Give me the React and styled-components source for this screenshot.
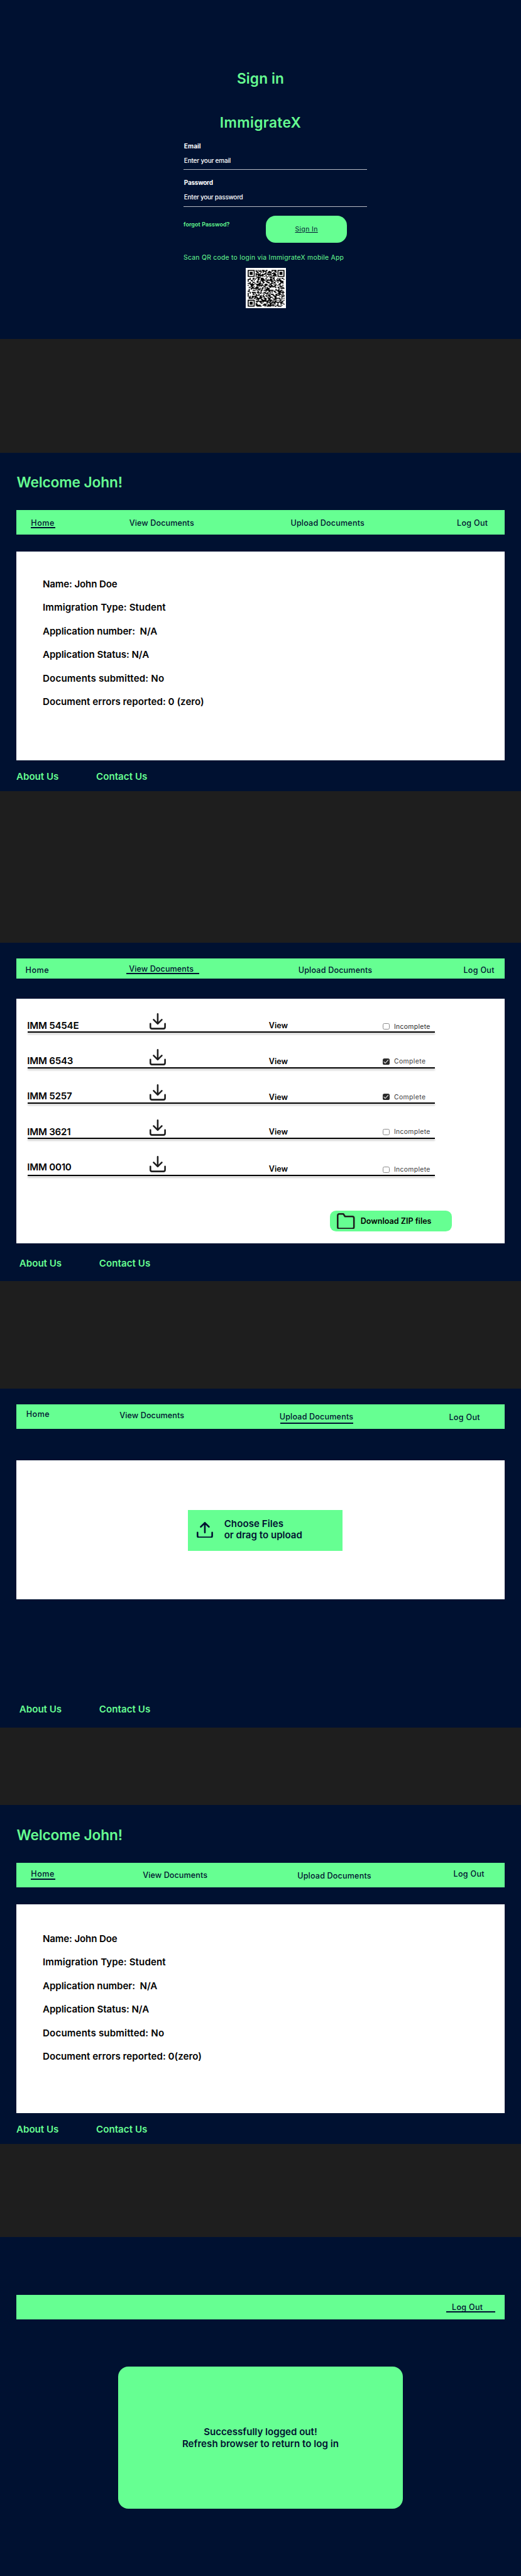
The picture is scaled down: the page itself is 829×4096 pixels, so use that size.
import React from 'react';
import styled, { createGlobalStyle, css } from 'styled-components';

const navy = '#001131';
const green = '#66ff92';
const ink = '#1e1e1e';

// 1rem is one 128th of the window's width, so every length follows the window.
const GlobalStyle = createGlobalStyle`
  html { font-size: calc(100vw / 128); background: #1e1e1e; }
  body { margin: 0; font-family: Inter, 'Liberation Sans', sans-serif; font-weight: 600; }
  *, *::before, *::after { box-sizing: border-box; }
  h1, h2, p { margin: 0; font-weight: inherit; }
  a { color: inherit; text-decoration: none; }
`;

const Board = styled.main`
  display: flex;
  flex-direction: column;
  width: 128rem;
`;

const Screen = styled.section`
  display: flex;
  flex-direction: column;
  height: 83.2rem;
  flex: none;
  margin-bottom: ${(p) => p.$after || 0}rem;
  padding: ${(p) => p.$top}rem 4rem 0;
  background: ${navy};
`;

const textStyle = css`
  letter-spacing: ${(p) => p.$track || 0}em;
  white-space: pre;
`;

const Title = styled.h1`
  ${textStyle}
  font-size: 3.5rem;
  line-height: 4.4rem;
  color: ${green};
`;

const CenteredTitle = styled(Title)`
  text-align: center;
  & + & { margin-top: 6.47rem; }
`;

const Welcome = styled(Title)`
  padding-left: 0.1rem;
  margin-bottom: 4.65rem;
`;

/* Sign in */
const Form = styled.form`
  display: flex;
  flex-direction: column;
  width: 45rem;
  margin: 2.49rem 0 0 41.1rem;
`;

const Field = styled.label`
  display: flex;
  flex-direction: column;
  padding-left: 0.12rem;
  font-size: 1.54rem;
  line-height: 2rem;
  color: #fff;
  & + & { margin-top: 2.15rem; }
`;

const FieldName = styled.span`
  ${textStyle}
  font-weight: 650;
`;

const FieldHint = styled.span`
  ${textStyle}
  margin: 1.6rem 0 0 -0.12rem;
  padding: 0 0 ${(p) => p.$space}rem 0.12rem;
  border-bottom: 1px solid rgba(255, 255, 255, 0.72);
  font-weight: 550;
`;

const Actions = styled.div`
  display: grid;
  grid-template-columns: 20.2rem 20rem;
  margin-top: 2.2rem;
`;

const Forgot = styled.a`
  ${textStyle}
  margin-top: 1.15rem;
  font-size: 1.37rem;
  line-height: 1.7rem;
  color: ${green};
`;

const SignInButton = styled.button`
  height: 6.5rem;
  padding: 0;
  border: 0;
  border-radius: 2.4rem;
  background: ${green};
  color: ${navy};
  font: 400 1.6rem/2rem Inter, sans-serif;
  letter-spacing: 0.039em;
  text-decoration: underline;
`;

const ScanNote = styled.p`
  margin-top: 2.72rem;
  font-size: 1.6rem;
  line-height: 2rem;
  font-weight: 400;
  letter-spacing: 0.026em;
  white-space: nowrap;
  color: ${green};
`;

const QrImage = styled.svg`
  display: block;
  width: 10rem;
  height: 10rem;
  margin: 1.48rem 0 0 15.2rem;
  background: #fff;
`;

/* Navigation and footer */
const Nav = styled.nav`
  display: grid;
  grid-template-columns: ${(p) => p.$columns};
  align-items: start;
  flex: none;
  height: ${(p) => p.$height || 6}rem;
  padding: 0.08rem 0 0 ${(p) => p.$indent}rem;
  background: ${green};
  color: ${navy};
  font-weight: 550;
`;

const NavLink = styled.a`
  ${textStyle}
  margin-top: ${(p) => p.$drop}rem;
  font-size: 1.94rem;
  line-height: 2.4rem;
  ${(p) =>
    p.$bar &&
    css`
      &::after {
        content: '';
        display: block;
        width: ${p.$bar.width}rem;
        height: 0.3rem;
        margin: ${p.$bar.top - 0.08}rem 0 0 ${p.$bar.left}rem;
        background: ${navy};
      }
    `}
`;

const Footer = styled.footer`
  display: grid;
  grid-template-columns: 19.6rem auto;
  margin-top: ${(p) => p.$gap}rem;
  padding-left: ${(p) => p.$indent || 0}rem;
  font-size: 2.33rem;
  line-height: 2.9rem;
  color: ${green};
`;

const FooterLink = styled.a`
  ${textStyle}
`;

/* Panels */
const Panel = styled.div`
  display: flex;
  flex-direction: column;
  flex: none;
  height: ${(p) => p.$height}rem;
  margin-top: ${(p) => p.$gap}rem;
  background: #fff;
  color: #000;
`;

const Facts = styled.div`
  display: flex;
  flex-direction: column;
  gap: 2.9rem;
  padding: ${(p) => p.$top}rem 0 0 6.5rem;
  font-size: 2.33rem;
  line-height: 2.9rem;
`;

const Fact = styled.p`
  ${textStyle}
`;

const DocumentList = styled.div`
  display: flex;
  flex-direction: column;
  width: 100rem;
  margin-left: 2.8rem;
`;

const DocumentRow = styled.div`
  display: grid;
  grid-template-columns: 29.9rem 29.35rem 28.05rem auto;
  align-items: end;
  height: ${(p) => p.$height}rem;
`;

const Rule = styled.div`
  height: 0.3rem;
  background: #000;
  box-shadow: 0 0.4rem 0.4rem rgba(0, 0, 0, 0.25);
`;

const DocumentName = styled.span`
  ${textStyle}
  margin: 0 0 ${(p) => p.$lift}rem -0.12rem;
  font-size: 2.33rem;
  line-height: 2.9rem;
`;

const RowIcon = styled.span`
  display: flex;
  margin-bottom: ${(p) => p.$lift}rem;
`;

const ViewLink = styled.a`
  margin-bottom: ${(p) => p.$lift}rem;
  font-size: 1.94rem;
  line-height: 2.4rem;
  letter-spacing: 0.005em;
`;

const Status = styled.span`
  display: flex;
  align-items: flex-end;
  gap: 1.1rem;
  margin: 0 0 ${(p) => p.$lift}rem;
  font-size: 1.6rem;
  line-height: 2rem;
  font-weight: 400;
  letter-spacing: ${(p) => (p.$done ? 0.042 : 0.034)}em;
  color: ${(p) => p.$color};
`;

const Box = styled.span`
  display: flex;
  width: 1.6rem;
  height: 1.6rem;
  margin-bottom: 0.2rem;
  border-radius: 0.4rem;
  ${(p) => (p.$done ? 'background: #2c2c2c;' : 'border: 1px solid #8a8a8a;')}
`;

const Glyph = styled.svg`
  display: block;
  width: ${(p) => p.$w}rem;
  height: ${(p) => p.$h}rem;
  fill: none;
  stroke: ${(p) => p.$color};
  stroke-width: ${(p) => p.$stroke || 2};
  stroke-linecap: round;
  stroke-linejoin: round;
`;

const ZipButton = styled.button`
  display: flex;
  align-items: center;
  gap: 1.43rem;
  width: 30rem;
  height: 5rem;
  margin: 8.6rem 0 0 77rem;
  padding: 0 0 0 1.77rem;
  border: 0;
  border-radius: 1.5rem;
  background: ${green};
  color: #000;
  font: 600 1.94rem/2.4rem Inter, sans-serif;
  letter-spacing: 0;
`;

const DropZone = styled.div`
  display: flex;
  align-items: flex-start;
  gap: 2.77rem;
  width: 38rem;
  height: 10rem;
  margin: 12.1rem 0 0 42.1rem;
  padding: 1.98rem 0 0 2.2rem;
  background: ${green};
  color: ${navy};
  font-size: 2.33rem;
  line-height: 2.9rem;

  svg { margin-top: 0.92rem; }
`;

const Line = styled.span`
  ${textStyle}
  display: block;
`;

const Notice = styled.div`
  display: flex;
  flex-direction: column;
  align-items: center;
  justify-content: center;
  width: 70rem;
  height: 35rem;
  margin: 11.6rem 0 0 25rem;
  padding-top: 0.2rem;
  border-radius: 2.5rem;
  background: ${green};
  color: ${navy};
  font-size: 2.33rem;
  line-height: 2.9rem;
`;

const DownloadIcon = () => (
  <Glyph $w={4} $h={4} $color={ink} viewBox="2 2 20 20">
    <path d="M21 15v4a2 2 0 0 1-2 2H5a2 2 0 0 1-2-2v-4M7 10l5 5 5-5M12 15V3" />
  </Glyph>
);

const UploadIcon = () => (
  <Glyph $w={4} $h={4} $color={navy} viewBox="2 2 20 20">
    <path d="M21 15v4a2 2 0 0 1-2 2H5a2 2 0 0 1-2-2v-4M17 8l-5-5-5 5M12 3v12" />
  </Glyph>
);

const FolderIcon = () => (
  <Glyph $w={4.4} $h={4} $color={ink} viewBox="1 2 22 20">
    <path d="M22 19a2 2 0 0 1-2 2H4a2 2 0 0 1-2-2V5a2 2 0 0 1 2-2h5l2 3h9a2 2 0 0 1 2 2z" />
  </Glyph>
);

const Check = () => (
  <Glyph $w={1.6} $h={1.6} $color="#fff" $stroke={1.6} viewBox="0 0 16 16">
    <path d="M13.2 4.2 6.1 11.6 2.9 8.3" />
  </Glyph>
);

const QR_SIZE = 37;

// Dark when the module belongs to a square ring pattern, null outside of it.
function ring(x, y, cx, cy, radius) {
  const d = Math.max(Math.abs(x - cx), Math.abs(y - cy));
  if (d > radius) return null;
  if (radius === 2) return d !== 1;
  return d !== 2 && d !== 4;
}

function qrPath() {
  let seed = 20231;
  let path = '';
  for (let y = 0; y < QR_SIZE; y += 1) {
    let start = -1;
    for (let x = 0; x <= QR_SIZE; x += 1) {
      let dark = false;
      if (x < QR_SIZE) {
        seed = (seed * 1103515245 + 12345) % 2147483648;
        const fixed =
          ring(x, y, 3, 3, 4) ?? ring(x, y, 33, 3, 4) ?? ring(x, y, 3, 33, 4) ?? ring(x, y, 30, 30, 2);
        if (fixed !== null) dark = fixed;
        else if (x === 6 || y === 6) dark = (x + y) % 2 === 0;
        else dark = (seed >> 16) % 100 < 52;
      }
      if (dark && start < 0) start = x;
      if (!dark && start >= 0) {
        path += `M${start} ${y}h${x - start}v1h${start - x}z`;
        start = -1;
      }
    }
  }
  return path;
}

const QrCode = () => (
  <QrImage viewBox="-2 -2 41 41">
    <path d={qrPath()} fill="#000" />
  </QrImage>
);

const tracks = { Home: 0.041, 'View Documents': 0.009, 'Upload Documents': 0.015, 'Log Out': 0.024 };

const NavBar = ({ indent, columns, height, items }) => (
  <Nav $indent={indent} $columns={columns} $height={height}>
    {items.map(([name, drop, bar]) => (
      <NavLink key={name} href="#" $drop={drop} $bar={bar} $track={tracks[name]}>
        {name}
      </NavLink>
    ))}
  </Nav>
);

const PageFooter = ({ gap, indent }) => (
  <Footer $gap={gap} $indent={indent}>
    <FooterLink href="#" $track={0}>About Us</FooterLink>
    <FooterLink href="#" $track={0.004}>Contact Us</FooterLink>
  </Footer>
);

const facts = (errors) => [
  ['Name: John Doe', -0.009],
  ['Immigration Type: Student', 0.008],
  ['Application number:  N/A', -0.003],
  ['Application Status: N/A', -0.002],
  ['Documents submitted: No', 0.012],
  [`Document errors reported: ${errors}`, 0.003],
];

const Home = ({ after, nav, factsTop, errors }) => (
  <Screen $top={5.15} $after={after}>
    <Welcome $track={-0.005}>Welcome John!</Welcome>
    <NavBar {...nav} />
    <Panel $gap={4.1} $height={51.3}>
      <Facts $top={factsTop}>
        {facts(errors).map(([text, track]) => (
          <Fact key={text} $track={track}>{text}</Fact>
        ))}
      </Facts>
    </Panel>
    <PageFooter gap={2.68} indent={0.02} />
  </Screen>
);

const documents = [
  { name: 'IMM 5454E', done: false, height: 8.1, lifts: [0.02, 0.6, 0.32, 0.3], color: '#1e1e1e' },
  { name: 'IMM 6543', done: true, height: 8.4, lifts: [0.02, 0.4, 0.12, 0.4], color: '#3a3a3a' },
  { name: 'IMM 5257', done: true, height: 8.4, lifts: [0.02, 0.5, 0.12, 0.4], color: '#3a3a3a' },
  { name: 'IMM 3621', done: false, height: 8.3, lifts: [-0.08, 0.4, 0.12, 0.4], color: '#3a3a3a' },
  { name: 'IMM 0010', done: false, height: 8.8, lifts: [0.32, 0.6, 0.22, 0.2], color: '#3a3a3a' },
];

export default function App() {
  return (
    <>
      <GlobalStyle />
      <Board>
        <Screen $top={17.08} $after={27.9}>
          <CenteredTitle $track={0.006}>Sign in</CenteredTitle>
          <CenteredTitle $track={0.016}>ImmigrateX</CenteredTitle>
          <Form>
            <Field>
              <FieldName $track={0.008}>Email</FieldName>
              <FieldHint $track={-0.018} $space={1.1}>Enter your email</FieldHint>
            </Field>
            <Field>
              <FieldName $track={-0.025}>Password</FieldName>
              <FieldHint $track={-0.025} $space={1.24}>Enter your password</FieldHint>
            </Field>
            <Actions>
              <Forgot href="#" $track={0.013}>forgot Passwod?</Forgot>
              <SignInButton type="button">Sign In</SignInButton>
            </Actions>
            <ScanNote>Scan QR code to login via ImmigrateX mobile App</ScanNote>
            <QrCode />
          </Form>
        </Screen>

        <Home
          after={37.1}
          factsTop={6.58}
          errors="0 (zero)"
          nav={{
            indent: 3.62,
            columns: '24.16rem 39.62rem 40.87rem auto',
            items: [
              ['Home', 1.79, { width: 6, top: -0.16, left: 0 }],
              ['View Documents', 1.79],
              ['Upload Documents', 1.79],
              ['Log Out', 1.87],
            ],
          }}
        />

        <Screen $top={3.9} $after={26.3}>
          <NavBar
            indent={2.27}
            height={5}
            columns="25.41rem 41.62rem 40.57rem auto"
            items={[
              ['Home', 1.59],
              ['View Documents', 1.29, { width: 18, top: -0.09, left: -0.68 }],
              ['Upload Documents', 1.59],
              ['Log Out', 1.59],
            ]}
          />
          <Panel $gap={4.9} $height={60}>
            <DocumentList>
              {documents.map(({ name, done, height, lifts, color }) => (
                <React.Fragment key={name}>
                  <DocumentRow $height={height}>
                    <DocumentName $track={-0.014} $lift={lifts[0]}>{name}</DocumentName>
                    <RowIcon $lift={lifts[1]}><DownloadIcon /></RowIcon>
                    <ViewLink href="#" $lift={lifts[2]}>View</ViewLink>
                    <Status $done={done} $lift={lifts[3]} $color={color}>
                      <Box $done={done}>{done && <Check />}</Box>
                      {done ? 'Complete' : 'Incomplete'}
                    </Status>
                  </DocumentRow>
                  <Rule />
                </React.Fragment>
              ))}
            </DocumentList>
            <ZipButton type="button">
              <FolderIcon />
              Download ZIP files
            </ZipButton>
          </Panel>
          <PageFooter gap={3.68} indent={0.76} />
        </Screen>

        <Screen $top={3.9} $after={19.1}>
          <NavBar
            indent={2.44}
            columns="22.93rem 39.29rem 41.66rem auto"
            items={[
              ['Home', 1.19],
              ['View Documents', 1.39],
              ['Upload Documents', 1.79, { width: 18, top: 0.31, left: 0.14 }],
              ['Log Out', 1.99],
            ]}
          />
          <Panel $gap={7.8} $height={34.1}>
            <DropZone>
              <UploadIcon />
              <div>
                <Line $track={0.005}>Choose Files</Line>
                <Line $track={0}>or drag to upload</Line>
              </div>
            </DropZone>
          </Panel>
          <PageFooter gap={25.63} indent={0.76} />
        </Screen>

        <Home
          after={22.8}
          factsTop={7.08}
          errors="0(zero)"
          nav={{
            indent: 3.62,
            columns: '27.45rem 37.99rem 38.36rem auto',
            items: [
              ['Home', 1.49, { width: 6, top: -0.07, left: 0 }],
              ['View Documents', 1.79],
              ['Upload Documents', 1.89],
              ['Log Out', 1.49],
            ],
          }}
        />

        <Screen $top={14.2}>
          <NavBar
            indent={107.02}
            columns="auto"
            items={[['Log Out', 1.79, { width: 12, top: -0.09, left: -1.32 }]]}
          />
          <Notice>
            <Line $track={0}>Successfully logged out!</Line>
            <Line $track={0.002}>Refresh browser to return to log in</Line>
          </Notice>
        </Screen>
      </Board>
    </>
  );
}
